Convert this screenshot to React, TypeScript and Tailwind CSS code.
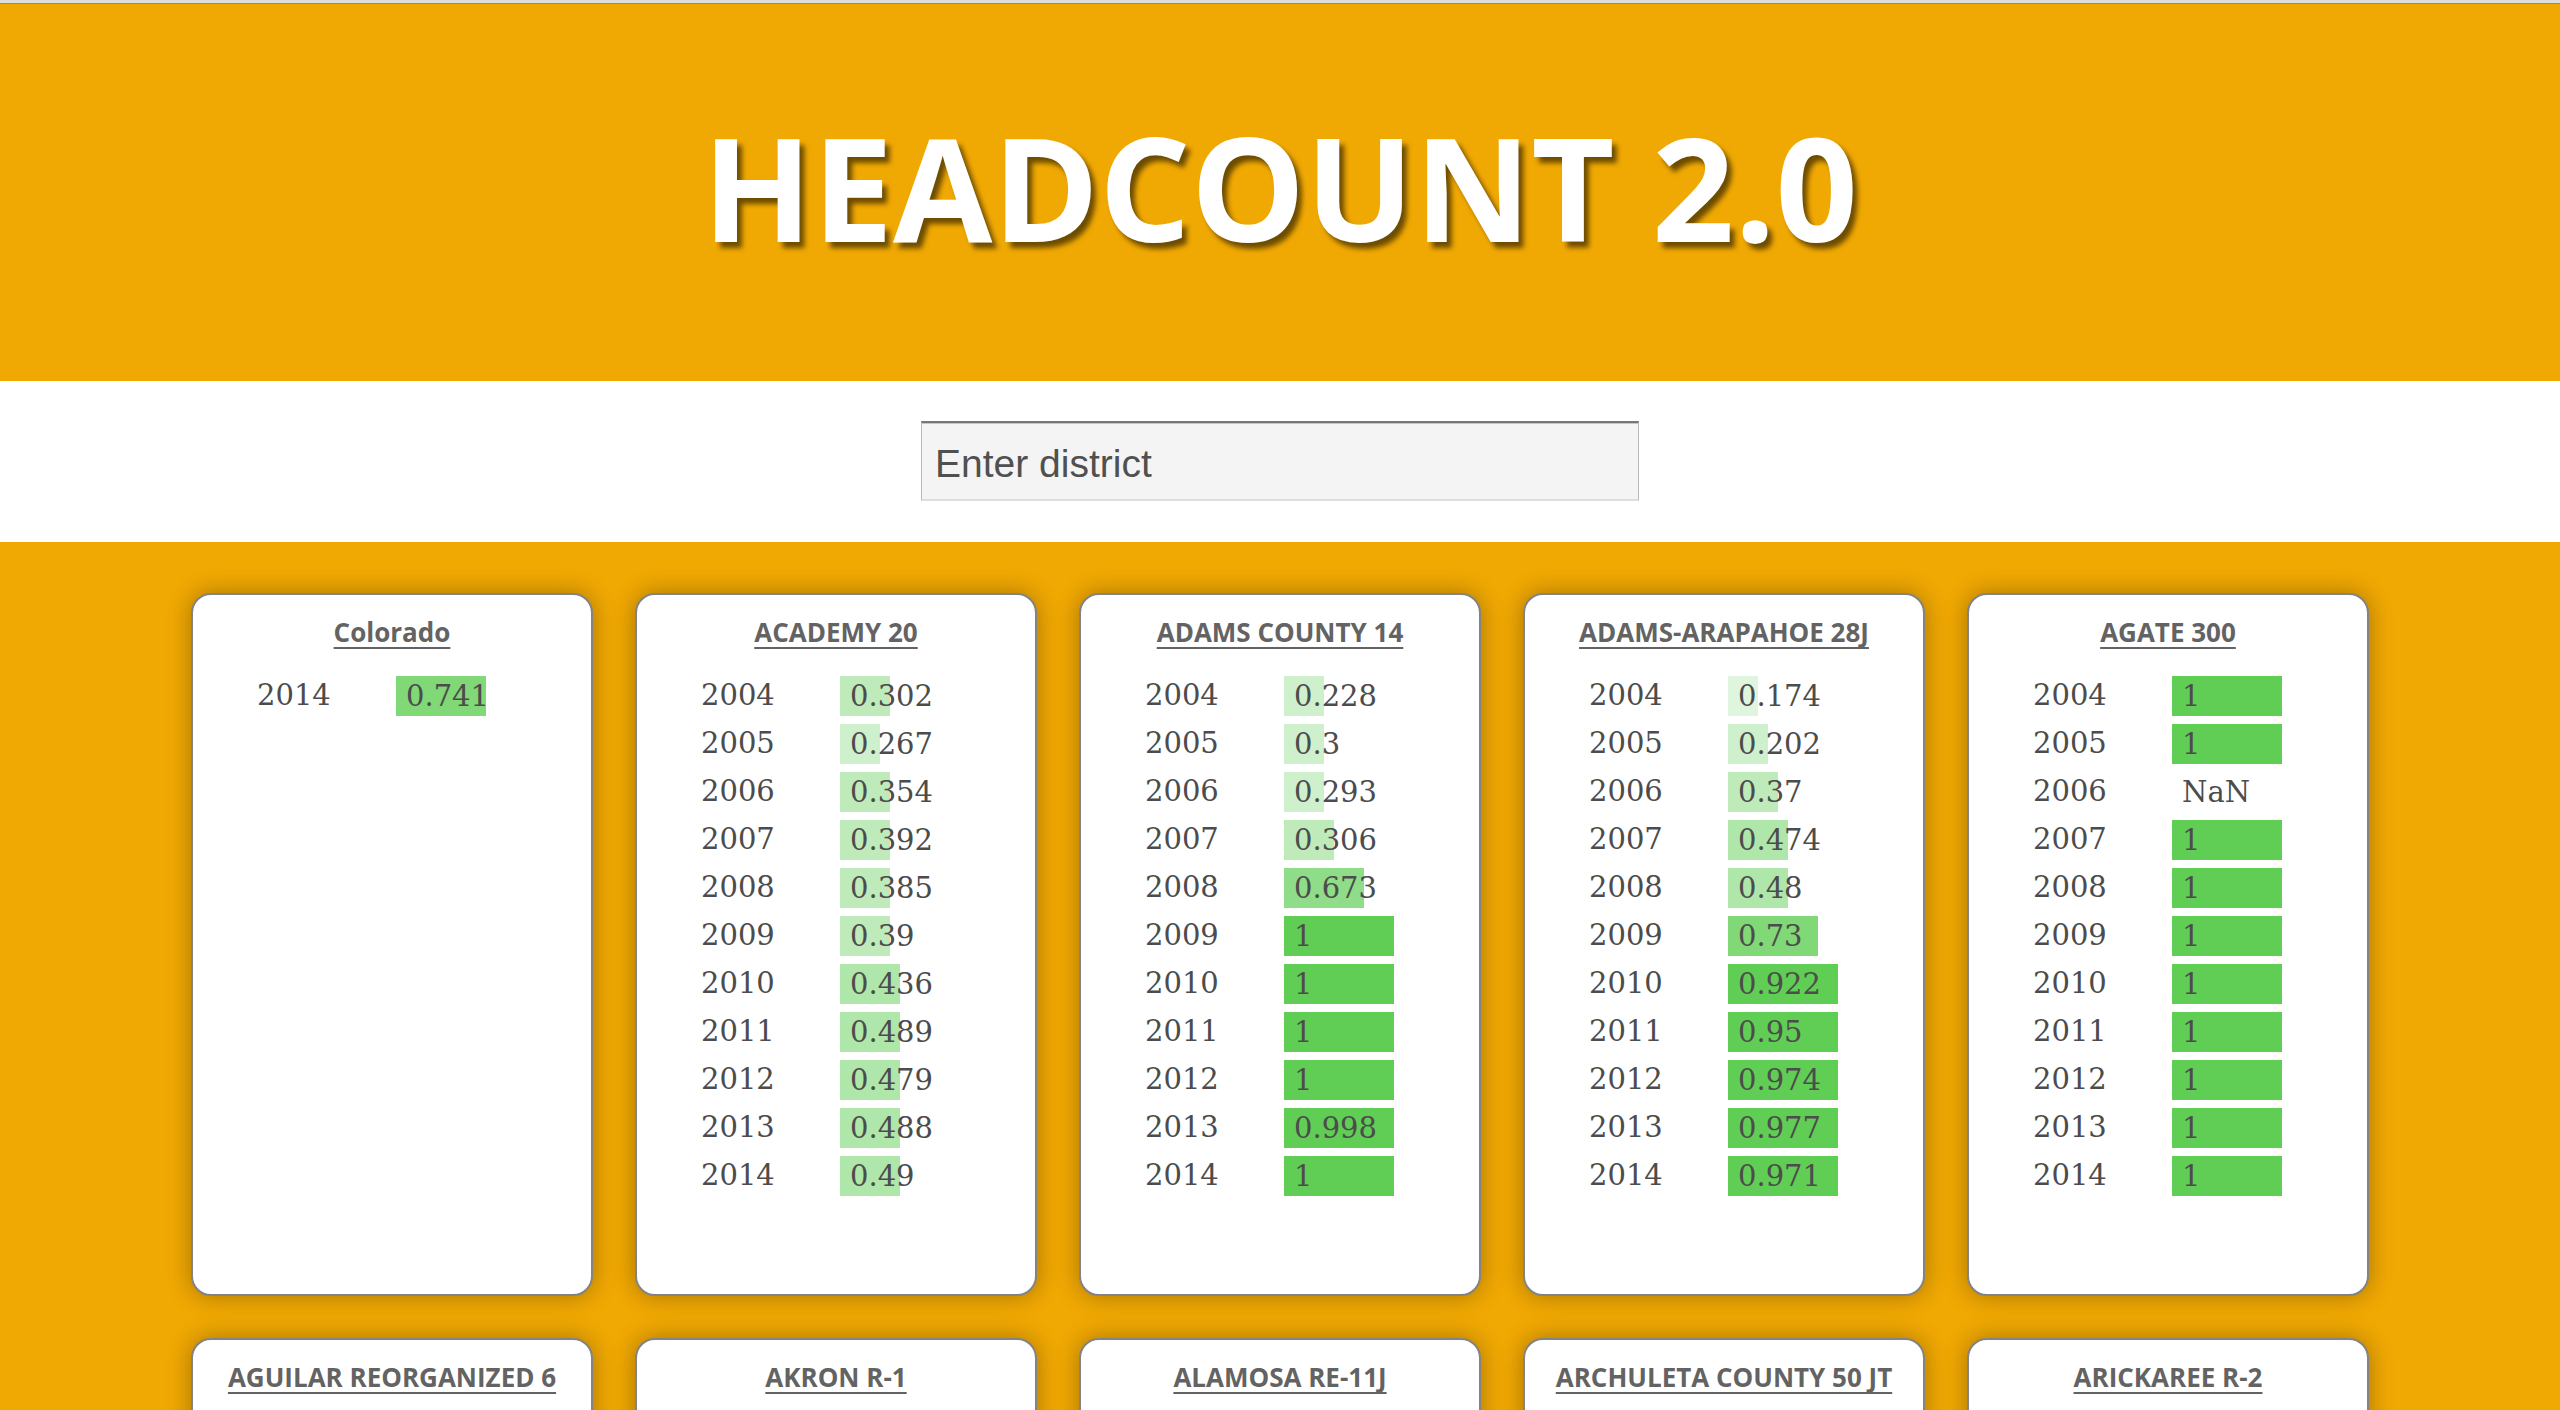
import React from "react";

type Row = { year: number; value: number };
type District = { name: string; rows: Row[] };

const years = [2004, 2005, 2006, 2007, 2008, 2009, 2010, 2011, 2012, 2013, 2014];

function series(values: number[]): Row[] {
  return values.map((value, i) => ({ year: years[i], value }));
}

const districts: District[] = [
  { name: "Colorado", rows: [{ year: 2014, value: 0.741 }] },
  {
    name: "ACADEMY 20",
    rows: series([0.302, 0.267, 0.354, 0.392, 0.385, 0.39, 0.436, 0.489, 0.479, 0.488, 0.49]),
  },
  {
    name: "ADAMS COUNTY 14",
    rows: series([0.228, 0.2996, 0.293, 0.306, 0.673, 1, 1, 1, 1, 0.998, 1]),
  },
  {
    name: "ADAMS-ARAPAHOE 28J",
    rows: series([0.174, 0.202, 0.37, 0.474, 0.48, 0.73, 0.922, 0.95, 0.974, 0.977, 0.971]),
  },
  {
    name: "AGATE 300",
    rows: series([1, 1, NaN, 1, 1, 1, 1, 1, 1, 1, 1]),
  },
  { name: "AGUILAR REORGANIZED 6", rows: [] },
  { name: "AKRON R-1", rows: [] },
  { name: "ALAMOSA RE-11J", rows: [] },
  { name: "ARCHULETA COUNTY 50 JT", rows: [] },
  { name: "ARICKAREE R-2", rows: [] },
];

// bar width + green strength grow with the value, one step per tenth
const buckets = [
  "w-[20px] bg-[#60ce55]/10",
  "w-[30px] bg-[#60ce55]/20",
  "w-[40px] bg-[#60ce55]/30",
  "w-[50px] bg-[#60ce55]/40",
  "w-[60px] bg-[#60ce55]/50",
  "w-[70px] bg-[#60ce55]/60",
  "w-[80px] bg-[#60ce55]/70",
  "w-[90px] bg-[#60ce55]/80",
  "w-[100px] bg-[#60ce55]/90",
  "w-[110px] bg-[#60ce55]",
];

function barClass(v: number) {
  if (Number.isNaN(v)) return "w-[110px]";
  const i = Math.min(9, Math.max(0, Math.floor(v * 10)));
  return buckets[i];
}

function fmt(v: number) {
  if (Number.isNaN(v)) return "NaN";
  return String(Math.round(v * 1000) / 1000);
}

function DistrictCard({ district }: { district: District }) {
  return (
    <div className="w-[402px] h-[703px] bg-white border-2 border-[#838383] rounded-[20px] shadow-[0_0_24px_rgba(0,0,0,0.3)] pt-[17px]">
      <h2 className="text-center text-[26px] leading-[40px] font-bold text-[#636363] underline decoration-2 underline-offset-[5px] font-['Open_Sans',sans-serif]">
        {district.name}
      </h2>
      <div className="mt-[20px] font-['DejaVu_Serif',serif] text-[29px] text-[#4c4c4c]">
        {district.rows.map(r => (
          <div key={r.year} className="flex items-center h-[48px]">
            <span className="pl-[64px] w-[203px] shrink-0">{r.year}</span>
            <div className={`${barClass(r.value)} h-[40px] leading-[40px] pl-[10px] whitespace-nowrap`}>
              {fmt(r.value)}
            </div>
          </div>
        ))}
      </div>
    </div>
  );
}

export default function App() {
  return (
    <div className="min-h-screen bg-[#f0a803]">
      <div className="h-[4px] bg-[#dedede] border-b border-[#8a8a8a]" />
      <header className="h-[377px] flex items-center justify-center pb-[14px]">
        <h1 className="text-white text-[144px] leading-none font-bold font-['Open_Sans',sans-serif] [text-shadow:5px_6px_5px_rgba(0,0,0,0.55)]">
          HEADCOUNT 2.0
        </h1>
      </header>
      <div className="bg-white h-[161px] flex justify-center pt-[40px]">
        <input
          type="text"
          placeholder="Enter district"
          className="w-[718px] h-[80px] bg-[#f4f4f4] border-t-2 border-t-[#777777] border-x border-x-[#b9b9b9] border-b-2 border-b-[#dddddd] shadow-[inset_0_1px_0_#c4c4c4] pl-[13px] pt-[6px] text-[39px] text-[#505050] placeholder:text-[#505050] font-['Liberation_Sans',Arial,sans-serif] outline-none"
        />
      </div>
      <main className="pt-[51px] pb-[60px]">
        <div className="w-[2178px] mx-auto flex flex-wrap gap-[42px]">
          {districts.map(d => (
            <DistrictCard key={d.name} district={d} />
          ))}
        </div>
      </main>
    </div>
  );
}
